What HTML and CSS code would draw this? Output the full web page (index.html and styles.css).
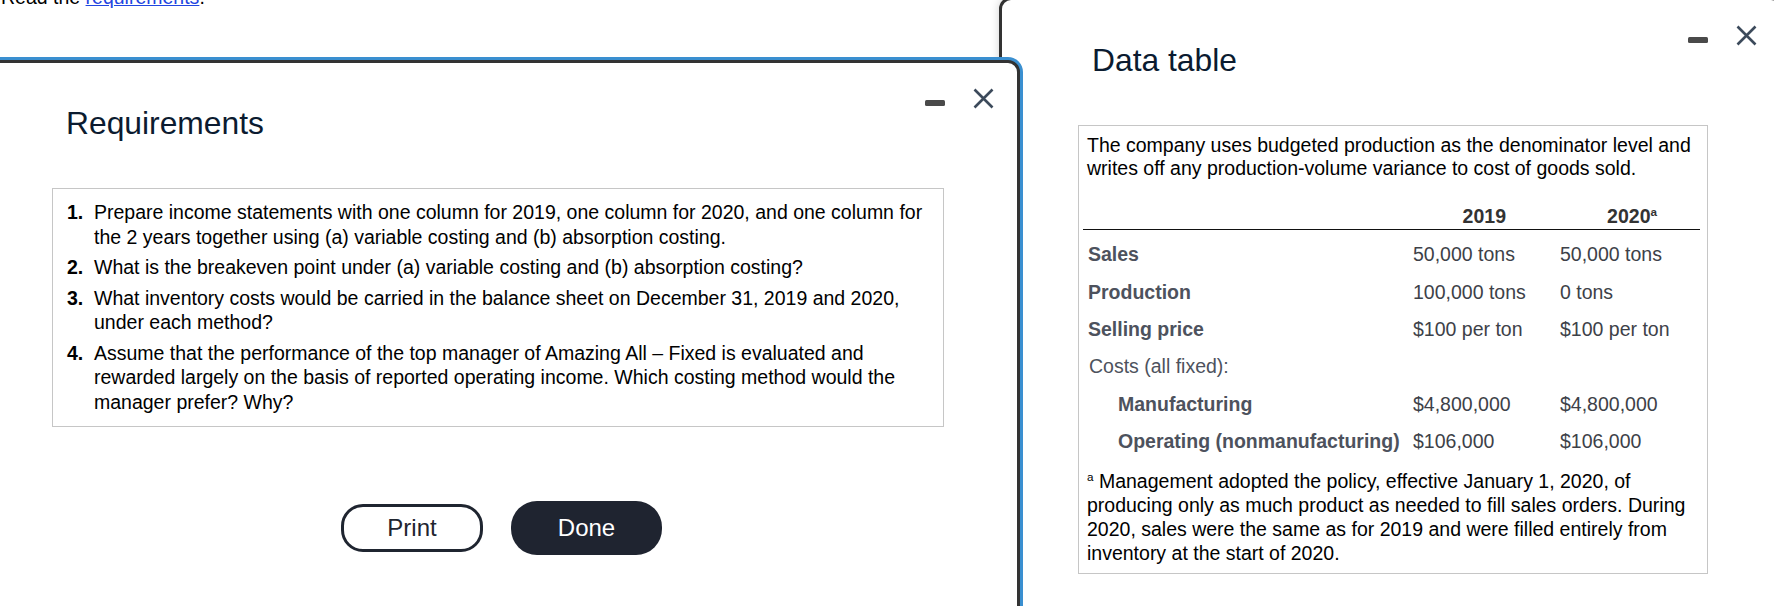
FILE: index.html
```html
<!DOCTYPE html>
<html lang="en">
<head>
<meta charset="utf-8">
<title>Requirements and Data table</title>
<link rel="stylesheet" href="styles.css">
</head>
<body>
<div class="page">
  <p class="intro">Read the <a class="link" href="#">requirements</a>.</p>
</div>

<section class="dialog dialog-data">
  <header class="dlg-head">
    <h2 class="dlg-title">Data table</h2>
    <div class="dlg-controls">
      <span class="ctl-min"></span>
      <svg class="ctl-close" viewBox="0 0 21 21" aria-hidden="true"><path d="M1.5 1.5L19.5 19.5M19.5 1.5L1.5 19.5" /></svg>
    </div>
  </header>
  <div class="data-box">
    <p class="data-intro">The company uses budgeted production as the denominator level and writes off any production-volume variance to cost of goods sold.</p>
    <div class="data-table">
      <div class="dt-row dt-head">
        <span class="dt-label"></span>
        <span class="dt-hd dt-c1">2019</span>
        <span class="dt-hd dt-c2">2020<sup>a</sup></span>
      </div>
      <div class="dt-row dt-first">
        <span class="dt-label">Sales</span>
        <span class="dt-val dt-c1">50,000 tons</span>
        <span class="dt-val dt-c2">50,000 tons</span>
      </div>
      <div class="dt-row">
        <span class="dt-label">Production</span>
        <span class="dt-val dt-c1">100,000 tons</span>
        <span class="dt-val dt-c2">0 tons</span>
      </div>
      <div class="dt-row">
        <span class="dt-label">Selling price</span>
        <span class="dt-val dt-c1">$100 per ton</span>
        <span class="dt-val dt-c2">$100 per ton</span>
      </div>
      <div class="dt-row">
        <span class="dt-plain">Costs (all fixed):</span>
        <span></span>
        <span></span>
      </div>
      <div class="dt-row">
        <span class="dt-label dt-indent">Manufacturing</span>
        <span class="dt-val dt-c1">$4,800,000</span>
        <span class="dt-val dt-c2">$4,800,000</span>
      </div>
      <div class="dt-row">
        <span class="dt-label dt-indent">Operating (nonmanufacturing)</span>
        <span class="dt-val dt-c1">$106,000</span>
        <span class="dt-val dt-c2">$106,000</span>
      </div>
    </div>
    <p class="footnote"><sup>a</sup> Management adopted the policy, effective January 1, 2020, of producing only as much product as needed to fill sales orders. During 2020, sales were the same as for 2019 and were filled entirely from inventory at the start of 2020.</p>
  </div>
</section>

<section class="dialog dialog-req">
  <header class="dlg-head">
    <h2 class="dlg-title">Requirements</h2>
    <div class="dlg-controls">
      <span class="ctl-min"></span>
      <svg class="ctl-close" viewBox="0 0 21 21" aria-hidden="true"><path d="M1.5 1.5L19.5 19.5M19.5 1.5L1.5 19.5" /></svg>
    </div>
  </header>
  <div class="req-box">
    <ol class="req-list">
      <li class="req-item"><span class="req-num">1.</span><span class="req-text">Prepare income statements with one column for 2019, one column for 2020, and one column for the 2 years together using (a) variable costing and (b) absorption costing.</span></li>
      <li class="req-item"><span class="req-num">2.</span><span class="req-text">What is the breakeven point under (a) variable costing and (b) absorption costing?</span></li>
      <li class="req-item"><span class="req-num">3.</span><span class="req-text">What inventory costs would be carried in the balance sheet on December 31, 2019 and 2020, under each method?</span></li>
      <li class="req-item"><span class="req-num">4.</span><span class="req-text">Assume that the performance of the top manager of Amazing All &#8211; Fixed is evaluated and rewarded largely on the basis of reported operating income. Which costing method would the manager prefer? Why?</span></li>
    </ol>
  </div>
  <div class="req-actions">
    <button class="btn btn-print" type="button">Print</button>
    <button class="btn btn-done" type="button">Done</button>
  </div>
</section>
</body>
</html>
```

FILE: styles.css
```css
* {
  box-sizing: border-box;
}

html, body {
  margin: 0;
  padding: 0;
}

body {
  position: relative;
  width: 1774px;
  height: 606px;
  overflow: hidden;
  background: #fff;
  font-family: "Liberation Sans", Arial, Helvetica, sans-serif;
  font-size: 19.5px;
  color: #000;
}

.intro {
  margin: -14px 0 0 1px;
  line-height: 22px;
}

.link {
  color: #1f45e0;
  text-decoration: underline;
}

/* dialogs: windows on the desktop */
.dialog {
  position: absolute;
  background: #fff;
  border: 3px solid #333;
  border-radius: 12px;
}

.dialog-data {
  left: 999px;
  top: -3px;
  width: 784px;
  height: 660px;
  padding: 25px 23px 0 76px;
  box-shadow: 0 0 10px rgba(0, 0, 0, 0.18);
  z-index: 1;
}

.dialog-req {
  left: -49px;
  top: 60px;
  width: 1069px;
  height: 600px;
  padding: 25px 23px 0 98px;
  box-shadow: 0 0 0 3px #3a8fd0;
  z-index: 2;
}

.dlg-head {
  display: flex;
  align-items: flex-start;
  justify-content: space-between;
}

.dlg-title {
  margin: 17px 0 0 14px;
  font-size: 31.8px;
  line-height: 36px;
  font-weight: 400;
  color: #0b1b30;
}

.dlg-controls {
  display: flex;
  align-items: flex-start;
  gap: 28px;
}

.ctl-min {
  display: block;
  width: 20px;
  height: 6px;
  margin-top: 12px;
  background: #4a4a4a;
  border-radius: 1.5px;
}

.ctl-close {
  display: block;
  width: 21px;
  height: 21px;
}

.ctl-close path {
  fill: none;
  stroke: #3c4a5b;
  stroke-width: 2.6;
}

/* Requirements */
.req-box {
  width: 892px;
  margin-top: 47px;
  border: 1px solid #c6c6c6;
  padding: 11px 14px 12px 14px;
}

.req-list {
  list-style: none;
  margin: 0;
  padding: 0;
}

.req-item {
  display: grid;
  grid-template-columns: 27px 1fr;
  line-height: 24.5px;
}

.req-item + .req-item {
  margin-top: 6px;
}

.req-num {
  font-weight: 700;
}

.req-actions {
  display: flex;
  justify-content: center;
  align-items: center;
  gap: 28px;
  width: 892px;
  margin-top: 74px;
  padding-left: 7px;
}

.btn {
  font-family: "Liberation Sans", Arial, Helvetica, sans-serif;
  font-size: 24px;
  padding: 0;
  cursor: pointer;
}

.btn-print {
  width: 142px;
  height: 48px;
  border: 3px solid #1f2530;
  border-radius: 22px;
  background: #fff;
  color: #1f2530;
}

.btn-done {
  width: 151px;
  height: 54px;
  border: none;
  border-radius: 26px;
  background: #1f2430;
  color: #fff;
}

/* Data table */
.data-box {
  width: 630px;
  margin-top: 47px;
  border: 1px solid #c6c6c6;
  padding: 7.5px 8px 7.5px 8px;
}

.data-intro {
  margin: 0;
  line-height: 23.7px;
}

.data-table {
  margin: 23.5px -1px 0 -4px;
}

.dt-row {
  display: grid;
  grid-template-columns: 322px 145px 150px;
  height: 37.3px;
  line-height: 37.3px;
  white-space: nowrap;
}

.dt-head {
  height: auto;
  line-height: 24px;
  padding-bottom: 1px;
  border-bottom: 1px solid #111;
}

.dt-first {
  margin-top: 6px;
}

.dt-hd {
  font-weight: 700;
  color: #333;
  text-align: right;
}

.dt-hd.dt-c1 {
  padding-right: 44px;
}

.dt-hd.dt-c2 {
  padding-right: 43px;
}

.dt-label {
  padding-left: 5px;
  font-weight: 700;
  color: #4d525d;
}

.dt-indent {
  padding-left: 35px;
}

.dt-plain {
  padding-left: 6px;
  color: #4d525d;
}

.dt-val {
  color: #3d4148;
}

.dt-val.dt-c1 {
  padding-left: 8px;
}

.dt-val.dt-c2 {
  padding-left: 10px;
}

sup {
  font-size: 0.6em;
  line-height: 0;
  vertical-align: super;
}

.footnote {
  margin: 9px 0 0 0;
  line-height: 24.1px;
}
```
